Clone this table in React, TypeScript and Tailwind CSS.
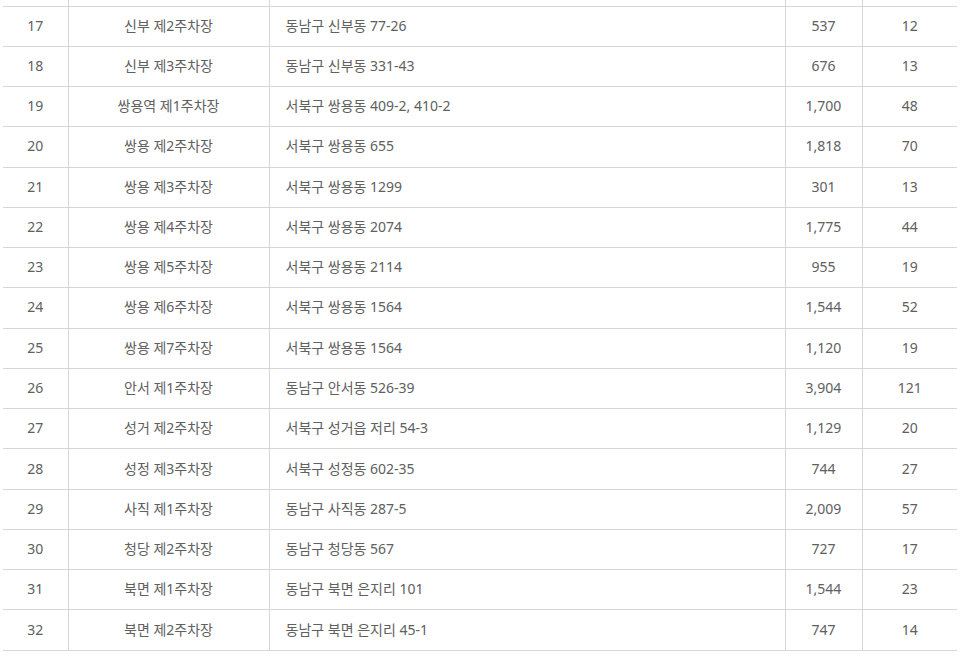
const rows: [number, string, string, string, string][] = [
  [17, "신부 제2주차장", "동남구 신부동 77-26", "537", "12"],
  [18, "신부 제3주차장", "동남구 신부동 331-43", "676", "13"],
  [19, "쌍용역 제1주차장", "서북구 쌍용동 409-2, 410-2", "1,700", "48"],
  [20, "쌍용 제2주차장", "서북구 쌍용동 655", "1,818", "70"],
  [21, "쌍용 제3주차장", "서북구 쌍용동 1299", "301", "13"],
  [22, "쌍용 제4주차장", "서북구 쌍용동 2074", "1,775", "44"],
  [23, "쌍용 제5주차장", "서북구 쌍용동 2114", "955", "19"],
  [24, "쌍용 제6주차장", "서북구 쌍용동 1564", "1,544", "52"],
  [25, "쌍용 제7주차장", "서북구 쌍용동 1564", "1,120", "19"],
  [26, "안서 제1주차장", "동남구 안서동 526-39", "3,904", "121"],
  [27, "성거 제2주차장", "서북구 성거읍 저리 54-3", "1,129", "20"],
  [28, "성정 제3주차장", "서북구 성정동 602-35", "744", "27"],
  [29, "사직 제1주차장", "동남구 사직동 287-5", "2,009", "57"],
  [30, "청당 제2주차장", "동남구 청당동 567", "727", "17"],
  [31, "북면 제1주차장", "동남구 북면 은지리 101", "1,544", "23"],
  [32, "북면 제2주차장", "동남구 북면 은지리 45-1", "747", "14"],
]

const cell = "border-[#d6d6d6] p-0 pb-[2px] font-normal align-middle"

export default function App() {
  return (
    <div className="min-h-screen bg-white pl-[3px] pr-[9px] font-['Noto_Sans','Noto_Sans_CJK_KR',sans-serif] text-[14px] text-[#606060]">
      <table className="w-full table-fixed border-collapse">
        <colgroup>
          <col className="w-[65px]" />
          <col className="w-[201px]" />
          <col className="w-[516px]" />
          <col className="w-[77px]" />
          <col />
        </colgroup>
        <tbody>
          <tr className="h-[6px] border-b border-[#d6d6d6]">
            <td className="border-[#d6d6d6] p-0" />
            <td className="border-l border-[#d6d6d6] p-0" />
            <td className="border-l border-[#d6d6d6] p-0" />
            <td className="border-l border-[#d6d6d6] p-0" />
            <td className="border-l border-[#d6d6d6] p-0" />
          </tr>
          {rows.map(([no, name, addr, total, extra]) => (
            <tr key={no} className="h-[40.27px] border-b border-[#d6d6d6]">
              <td className={`${cell} text-center`}>{no}</td>
              <td className={`${cell} border-l text-center`}>{name}</td>
              <td className={`${cell} border-l pl-4 text-left`}>{addr}</td>
              <td className={`${cell} border-l text-center`}>{total}</td>
              <td className={`${cell} border-l text-center`}>{extra}</td>
            </tr>
          ))}
        </tbody>
      </table>
    </div>
  )
}
